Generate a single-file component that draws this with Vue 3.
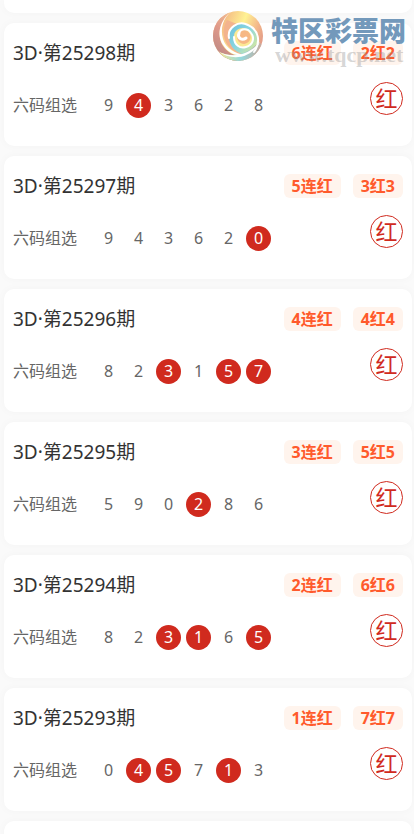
<script setup>
const records = [
  { issue: '25298', streak: '6连红', hits: '2红2', codes: [9, 4, 3, 6, 2, 8], won: [4] },
  { issue: '25297', streak: '5连红', hits: '3红3', codes: [9, 4, 3, 6, 2, 0], won: [0] },
  { issue: '25296', streak: '4连红', hits: '4红4', codes: [8, 2, 3, 1, 5, 7], won: [3, 5, 7] },
  { issue: '25295', streak: '3连红', hits: '5红5', codes: [5, 9, 0, 2, 8, 6], won: [2] },
  { issue: '25294', streak: '2连红', hits: '6红6', codes: [8, 2, 3, 1, 6, 5], won: [3, 1, 5] },
  { issue: '25293', streak: '1连红', hits: '7红7', codes: [0, 4, 5, 7, 1, 3], won: [4, 5, 1] },
]
</script>

<template>
  <main class="page">
    <div class="card card-end"></div>

    <article v-for="item in records" :key="item.issue" class="card">
      <header class="card-head">
        <h2 class="title">3D·第{{ item.issue }}期</h2>
        <div class="tags">
          <span class="tag">{{ item.streak }}</span>
          <span class="tag">{{ item.hits }}</span>
        </div>
      </header>
      <div class="card-body">
        <span class="label">六码组选</span>
        <ul class="codes">
          <li
            v-for="code in item.codes"
            :key="code"
            :class="['code', { 'code-won': item.won.includes(code) }]"
          >
            {{ code }}
          </li>
        </ul>
        <span class="stamp">红</span>
      </div>
    </article>

    <div class="card card-next"></div>

    <div class="watermark">
      <svg class="logo" viewBox="0 0 52 52" aria-hidden="true">
        <defs>
          <linearGradient id="left" x1="0.8" y1="0" x2="0.3" y2="1">
            <stop offset="0" stop-color="#f8c795" />
            <stop offset="0.5" stop-color="#e09a8a" />
            <stop offset="1" stop-color="#b98784" />
          </linearGradient>
          <linearGradient id="top" x1="0" y1="0.3" x2="1" y2="0.7">
            <stop offset="0" stop-color="#f0a47e" />
            <stop offset="0.5" stop-color="#fff293" />
            <stop offset="0.75" stop-color="#f4b98a" />
            <stop offset="1" stop-color="#dd9286" />
          </linearGradient>
          <linearGradient id="sea" x1="0" y1="0" x2="1" y2="0.8">
            <stop offset="0" stop-color="#6cc0dc" />
            <stop offset="0.5" stop-color="#8ad6e0" />
            <stop offset="1" stop-color="#dcea98" />
          </linearGradient>
          <linearGradient id="tail" x1="0" y1="0" x2="1" y2="0">
            <stop offset="0" stop-color="#f7e994" />
            <stop offset="0.5" stop-color="#93d8dc" />
            <stop offset="1" stop-color="#c9a79a" />
          </linearGradient>
          <clipPath id="disc">
            <circle cx="26" cy="26" r="25" />
          </clipPath>
        </defs>
        <g clip-path="url(#disc)">
          <path d="M0 0H52V52H0z" fill="url(#top)" />
          <path d="M20 0C8 10 4 25 11 36c5 7 12 10 19 10L28 52H0V0z" fill="url(#left)" />
          <path d="M15 10c-6 10-4 23 5 30 8 6 18 6 24 0l4-8-18-16z" fill="#f3b38d" />
          <path d="M17 27c0-10 10-16 19-12 11 5 13 18 5 27-3 3-7 4-11 2-8-3-13-9-13-17z" fill="url(#sea)" />
          <path d="M22 28c-1-8 7-12 13-9 7 4 7 14 0 18-6 2-12-2-13-9z" fill="#fbe995" />
          <path d="M25 25c2-6 10-7 13-1 2 5-1 9-6 10-4 0-8-4-7-9z" fill="#f6b884" />
          <path d="M7 42c14 6 28 3 40-10l4 4-14 16H16z" fill="url(#tail)" />
        </g>
        <path d="M20 1C8 10 4 24 11 35c5 8 14 12 23 10-12-1-20-7-23-16C8 18 11 8 20 1z" fill="#fff" />
        <path d="M6 41c13 8 30 5 42-9-8 16-28 20-42 9z" fill="#fff" />
        <g fill="none" stroke="#fff" stroke-linecap="round">
          <path d="M17 28c-2-10 9-18 19-13 11 5 13 17 6 27" stroke-width="2" />
          <path d="M22 27c0 8 6 12 12 10 7-2 9-9 5-14-3-5-10-5-12 0" stroke-width="2" />
          <path d="M27 23c-2 5 3 8 7 5" stroke-width="3" />
        </g>
      </svg>
      <div class="brand">
        <strong class="brand-name">特区彩票网</strong>
        <span class="brand-url">www.tqcp.net</span>
      </div>
    </div>
  </main>
</template>

<style>
body {
  margin: 0;
  background: #fafafa;
}
</style>

<style scoped>
.page {
  position: relative;
  box-sizing: border-box;
  height: 100vh;
  padding: 0 2px 0 4px;
  display: flex;
  flex-direction: column;
  gap: 10px;
  overflow: hidden;
  color: #333;
  font-family: 'Noto Sans', 'Noto Sans CJK SC', sans-serif;
}

.card {
  box-sizing: border-box;
  flex-shrink: 0;
  padding: 18px 9px 28px;
  border-radius: 10px;
  background: #fff;
  box-shadow: 0 0 10px rgba(0, 0, 0, 0.03);
}

.card-end {
  height: 13px;
  padding: 0;
  border-radius: 0 0 10px 10px;
}

.card-next {
  height: 123px;
}

.card-head {
  display: flex;
  align-items: center;
  justify-content: space-between;
  height: 24px;
}

.title {
  margin: 0;
  font-size: 19px;
  font-weight: 400;
  line-height: 24px;
}

.tags {
  display: flex;
  gap: 12px;
}

.tag {
  padding: 0 8px;
  border-radius: 6px;
  background: #fff4ed;
  color: #ff5a2c;
  font-size: 16px;
  font-weight: 700;
  line-height: 24px;
}

.card-body {
  display: flex;
  align-items: flex-end;
  height: 36px;
  margin-top: 17px;
}

.label {
  width: 83px;
  color: #666;
  font-size: 16px;
  line-height: 25px;
}

.codes {
  display: flex;
  gap: 5px;
  margin: 0;
  padding: 0;
  list-style: none;
}

.code {
  width: 25px;
  border-radius: 50%;
  color: #666;
  font-size: 16px;
  line-height: 25px;
  text-align: center;
}

.code-won {
  background: #d02a1e;
  color: #fff;
}

.stamp {
  box-sizing: border-box;
  align-self: flex-start;
  width: 33px;
  height: 33px;
  margin-left: auto;
  border: 1px solid #d02a1e;
  border-radius: 50%;
  color: #d02a1e;
  font-size: 22px;
  line-height: 31px;
  text-align: center;
}

.watermark {
  position: absolute;
  top: 10px;
  right: 8px;
  display: flex;
  gap: 7px;
  pointer-events: none;
}

.logo {
  width: 52px;
  height: 52px;
}

.brand {
  display: flex;
  flex-direction: column;
  padding-top: 6px;
}

.brand-name {
  color: #7399bb;
  font-size: 27px;
  font-weight: 900;
  line-height: 30px;
}

.brand-url {
  padding-left: 4px;
  color: rgba(150, 150, 150, 0.4);
  font-family: 'Liberation Serif', serif;
  font-size: 22px;
  font-weight: 700;
  line-height: 18px;
}
</style>
